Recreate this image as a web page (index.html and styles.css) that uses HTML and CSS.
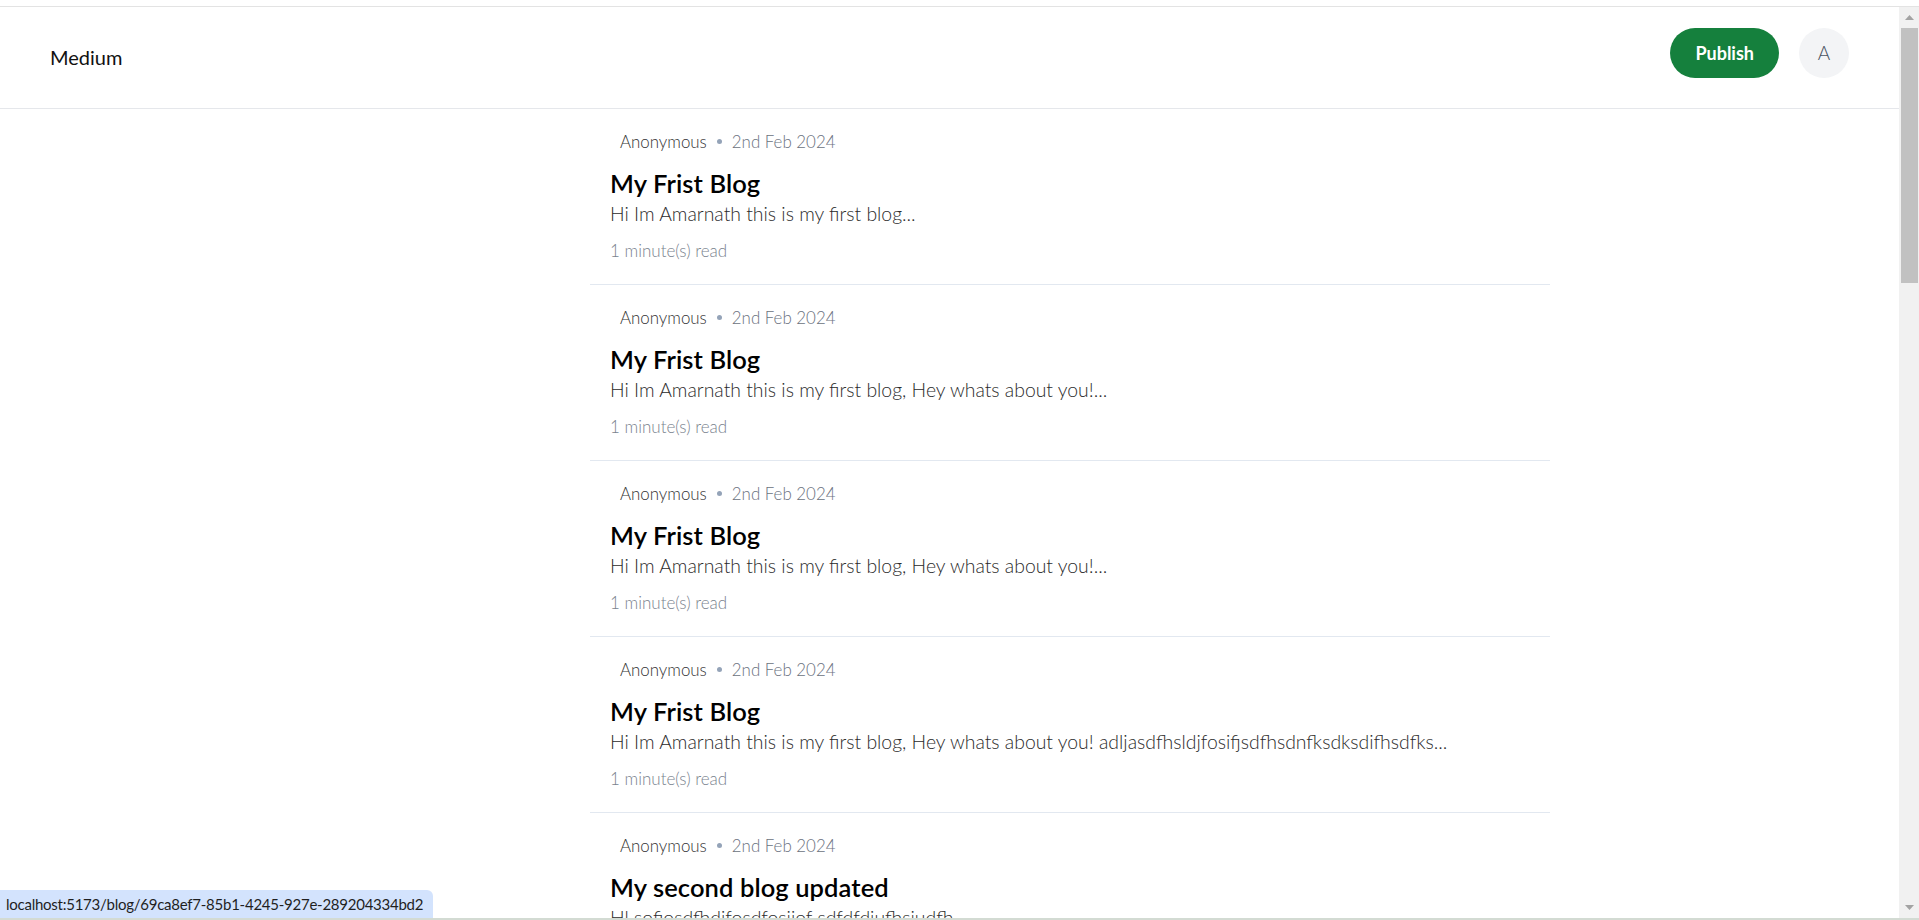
FILE: index.html
```html
<!DOCTYPE html>
<html lang="en">
<head>
<meta charset="utf-8">
<title>Medium</title>
<link rel="stylesheet" href="styles.css">
</head>
<body>
<div class="chrome-top"></div>
<div class="window">
  <div class="page">
    <header class="appbar">
      <div class="brand">Medium</div>
      <div class="actions">
        <button class="publish" type="button">Publish</button>
        <div class="avatar">A</div>
      </div>
    </header>
    <main class="feed">
      <article class="card">
        <div class="meta"><span class="author">Anonymous</span><span class="dot"></span><span class="date">2nd Feb 2024</span></div>
        <h2 class="title">My Frist Blog</h2>
        <p class="excerpt">Hi Im Amarnath this is my first blog...</p>
        <div class="read">1 minute(s) read</div>
      </article>
      <article class="card">
        <div class="meta"><span class="author">Anonymous</span><span class="dot"></span><span class="date">2nd Feb 2024</span></div>
        <h2 class="title">My Frist Blog</h2>
        <p class="excerpt">Hi Im Amarnath this is my first blog, Hey whats about you!...</p>
        <div class="read">1 minute(s) read</div>
      </article>
      <article class="card">
        <div class="meta"><span class="author">Anonymous</span><span class="dot"></span><span class="date">2nd Feb 2024</span></div>
        <h2 class="title">My Frist Blog</h2>
        <p class="excerpt">Hi Im Amarnath this is my first blog, Hey whats about you!...</p>
        <div class="read">1 minute(s) read</div>
      </article>
      <article class="card">
        <div class="meta"><span class="author">Anonymous</span><span class="dot"></span><span class="date">2nd Feb 2024</span></div>
        <h2 class="title">My Frist Blog</h2>
        <p class="excerpt">Hi Im Amarnath this is my first blog, Hey whats about you! adljasdfhsldjfosifjsdfhsdnfksdksdifhsdfks...</p>
        <div class="read">1 minute(s) read</div>
      </article>
      <article class="card">
        <div class="meta"><span class="author">Anonymous</span><span class="dot"></span><span class="date">2nd Feb 2024</span></div>
        <h2 class="title">My second blog updated</h2>
        <p class="excerpt">Hl sofiosdfhdifosdfosijof sdfdfdiufhsiudfh...</p>
        <div class="read">1 minute(s) read</div>
      </article>
    </main>
  </div>
  <div class="scrollbar">
    <div class="sb-btn"><svg width="9" height="5" viewBox="0 0 9 5"><polygon points="0,5 4.5,0 9,5" fill="#a3a3a3"/></svg></div>
    <div class="sb-thumb"></div>
    <div class="sb-space"></div>
    <div class="sb-btn"><svg width="9" height="5" viewBox="0 0 9 5"><polygon points="0,0 9,0 4.5,5" fill="#a3a3a3"/></svg></div>
  </div>
</div>
<div class="chrome-bottom"></div>
<div class="status">localhost:5173/blog/69ca8ef7-85b1-4245-927e-289204334bd2</div>
</body>
</html>
```

FILE: styles.css
```css
* { box-sizing: border-box; }

html, body {
  margin: 0;
  padding: 0;
  height: 100%;
  overflow: hidden;
  background: #ffffff;
}

body {
  font-family: Lato, "Open Sans", sans-serif;
  color: #000;
  display: flex;
  flex-direction: column;
}

.chrome-top {
  height: 7px;
  flex: none;
  border-bottom: 1px solid #e3e3e3;
}

.window {
  flex: 1;
  min-height: 0;
  display: flex;
}

.chrome-bottom {
  height: 2px;
  flex: none;
  background: #d3dbd3;
}

.page {
  flex: 1;
  min-width: 0;
  overflow: hidden;
}

/* app bar */
.appbar {
  height: 102px;
  border-bottom: 1px solid #e5e7eb;
  display: flex;
  align-items: center;
  justify-content: space-between;
  padding: 0 50px;
}

.brand {
  font-size: 20px;
  line-height: 30px;
  font-weight: 400;
  color: #111;
  margin-bottom: 2px;
}

.actions {
  display: flex;
  align-items: center;
  gap: 20px;
  margin-bottom: 10px;
}

.publish {
  height: 50px;
  padding: 0 25px;
  border: 0;
  border-radius: 25px;
  background: #15803d;
  color: #fff;
  font-family: inherit;
  font-size: 18px;
  font-weight: 700;
  line-height: 50px;
}

.avatar {
  width: 50px;
  height: 50px;
  border-radius: 50%;
  background: #f3f4f6;
  color: #4b5563;
  font-size: 19px;
  font-weight: 300;
  display: flex;
  align-items: center;
  justify-content: center;
}

/* feed */
.feed {
  padding-left: 590px;
}

.card {
  width: 960px;
  padding: 20px 20px 21px;
  border-bottom: 1px solid #e2e8f0;
}

.meta {
  display: flex;
  align-items: center;
  height: 25px;
  padding-left: 10px;
  font-size: 16.9px;
  font-weight: 300;
}

.author { color: #333; }

.dot {
  width: 5px;
  height: 5px;
  border-radius: 50%;
  background: #94a3b8;
  margin: 0 10px;
}

.date { color: #6b7280; }

.title {
  margin: 17px 0 0;
  font-size: 25.5px;
  line-height: 24px;
  font-weight: 600;
  letter-spacing: 0.1px;
  color: #000;
}

.excerpt {
  margin: 8px 0 0;
  font-size: 19.4px;
  line-height: 22px;
  font-weight: 300;
  color: #2b2b2b;
}

.read {
  margin-top: 14px;
  font-size: 17px;
  line-height: 24px;
  font-weight: 300;
  color: #7a828e;
}

/* scrollbar */
.scrollbar {
  width: 20px;
  flex: none;
  background: #f1f1f1;
  display: flex;
  flex-direction: column;
}

.sb-btn {
  height: 21px;
  display: flex;
  align-items: center;
  justify-content: center;
}

.sb-thumb {
  height: 255px;
  margin: 0 1px 0 2px;
  background: #c1c1c1;
}

.sb-space { flex: 1; }

/* hover status bubble */
.status {
  position: fixed;
  left: 0;
  bottom: 2px;
  height: 28px;
  padding: 0 10px 0 6px;
  background: #d3e3fd;
  border-top-right-radius: 6px;
  color: #1f1f1f;
  font-size: 15px;
  letter-spacing: -0.25px;
  line-height: 28px;
}
```
